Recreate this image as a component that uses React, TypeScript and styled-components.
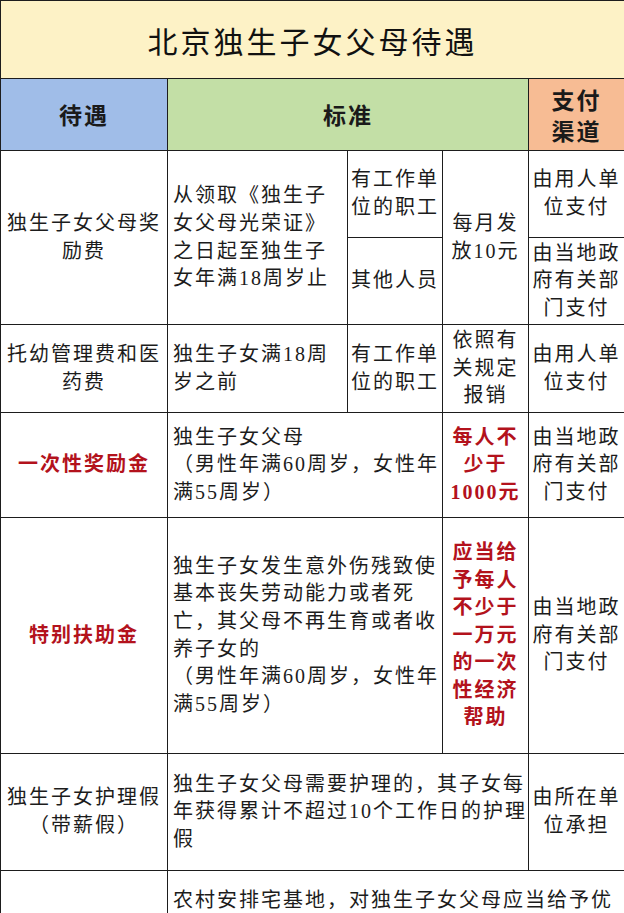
import React from "react";
import styled, { createGlobalStyle } from "styled-components";

const GlobalStyle = createGlobalStyle`
  html, body {
    margin: 0;
    padding: 0;
    background: #ffffff;
  }
  body {
    font-family: "Liberation Serif", "Noto Sans CJK SC", serif;
    color: #1c1c1c;
  }
`;

const LINE = "1.5px solid #1d1d1d";

const Table = styled.table`
  width: 624px;
  border-collapse: collapse;
  table-layout: fixed;
  border: ${LINE};
`;

const Col = styled.col<{ $w: number }>`
  width: ${(p) => p.$w}px;
`;

const Row = styled.tr<{ $h: number }>`
  height: ${(p) => p.$h}px;
`;

const TitleCell = styled.th`
  background: #fdf2c6;
  border: ${LINE};
  font-family: "Noto Sans CJK SC", sans-serif;
  font-size: 30px;
  font-weight: 400;
  letter-spacing: 3px;
  text-align: center;
  padding: 0;
  color: #111111;
`;

const HeadCell = styled.th<{ $bg: string }>`
  background: ${(p) => p.$bg};
  border: ${LINE};
  font-family: "Noto Sans CJK SC", sans-serif;
  font-size: 23px;
  font-weight: 700;
  letter-spacing: 2px;
  line-height: 31px;
  text-align: center;
  padding: 0;
  color: #1a1a1a;
`;

const Cell = styled.td<{ $align?: "left" | "center"; $red?: boolean; $top?: number }>`
  border: ${LINE};
  font-size: 20px;
  letter-spacing: 2px;
  line-height: 27.6px;
  white-space: nowrap;
  overflow: hidden;
  text-align: ${(p) => p.$align || "center"};
  vertical-align: ${(p) => (p.$top !== undefined ? "top" : "middle")};
  padding: ${(p) => (p.$top !== undefined ? `${p.$top}px` : "0")} 3px 0
    ${(p) => (p.$align === "left" ? "5px" : "3px")};
  color: ${(p) => (p.$red ? "#b3121c" : "#1c1c1c")};
  font-weight: ${(p) => (p.$red ? 700 : 400)};
`;

const Lines = ({ text }: { text: string[] }) => (
  <>
    {text.map((t, i) => (
      <React.Fragment key={i}>
        {i > 0 && <br />}
        {t}
      </React.Fragment>
    ))}
  </>
);

const App = () => {
  return (
    <>
      <GlobalStyle />
      <Table>
        <colgroup>
          <Col $w={167} />
          <Col $w={180} />
          <Col $w={95} />
          <Col $w={86} />
          <Col $w={96} />
        </colgroup>
        <thead>
          <Row $h={78}>
            <TitleCell colSpan={5}>北京独生子女父母待遇</TitleCell>
          </Row>
          <Row $h={72}>
            <HeadCell $bg="#a0bde8">待遇</HeadCell>
            <HeadCell $bg="#c3dfa6" colSpan={3}>标准</HeadCell>
            <HeadCell $bg="#f7bc94">
              <Lines text={["支付", "渠道"]} />
            </HeadCell>
          </Row>
        </thead>
        <tbody>
          <Row $h={87}>
            <Cell rowSpan={2}>
              <Lines text={["独生子女父母奖", "励费"]} />
            </Cell>
            <Cell rowSpan={2} $align="left">
              <Lines text={["从领取《独生子", "女父母光荣证》", "之日起至独生子", "女年满18周岁止"]} />
            </Cell>
            <Cell>
              <Lines text={["有工作单", "位的职工"]} />
            </Cell>
            <Cell rowSpan={2}>
              <Lines text={["每月发", "放10元"]} />
            </Cell>
            <Cell>
              <Lines text={["由用人单", "位支付"]} />
            </Cell>
          </Row>
          <Row $h={87}>
            <Cell>其他人员</Cell>
            <Cell>
              <Lines text={["由当地政", "府有关部", "门支付"]} />
            </Cell>
          </Row>
          <Row $h={88}>
            <Cell>
              <Lines text={["托幼管理费和医", "药费"]} />
            </Cell>
            <Cell $align="left">
              <Lines text={["独生子女满18周", "岁之前"]} />
            </Cell>
            <Cell>
              <Lines text={["有工作单", "位的职工"]} />
            </Cell>
            <Cell>
              <Lines text={["依照有", "关规定", "报销"]} />
            </Cell>
            <Cell>
              <Lines text={["由用人单", "位支付"]} />
            </Cell>
          </Row>
          <Row $h={105}>
            <Cell $red>一次性奖励金</Cell>
            <Cell colSpan={2} $align="left">
              <Lines text={["独生子女父母", "（男性年满60周岁，女性年", "满55周岁）"]} />
            </Cell>
            <Cell $red>
              <Lines text={["每人不", "少于", "1000元"]} />
            </Cell>
            <Cell>
              <Lines text={["由当地政", "府有关部", "门支付"]} />
            </Cell>
          </Row>
          <Row $h={236}>
            <Cell $red>特别扶助金</Cell>
            <Cell colSpan={2} $align="left">
              <Lines
                text={[
                  "独生子女发生意外伤残致使",
                  "基本丧失劳动能力或者死",
                  "亡，其父母不再生育或者收",
                  "养子女的",
                  "（男性年满60周岁，女性年",
                  "满55周岁）",
                ]}
              />
            </Cell>
            <Cell $red>
              <Lines text={["应当给", "予每人", "不少于", "一万元", "的一次", "性经济", "帮助"]} />
            </Cell>
            <Cell>
              <Lines text={["由当地政", "府有关部", "门支付"]} />
            </Cell>
          </Row>
          <Row $h={117}>
            <Cell>
              <Lines text={["独生子女护理假", "（带薪假）"]} />
            </Cell>
            <Cell colSpan={3} $align="left">
              <Lines text={["独生子女父母需要护理的，其子女每", "年获得累计不超过10个工作日的护理", "假"]} />
            </Cell>
            <Cell>
              <Lines text={["由所在单", "位承担"]} />
            </Cell>
          </Row>
          <Row $h={140}>
            <Cell />
            <Cell colSpan={4} $align="left" $top={16}>
              农村安排宅基地，对独生子女父母应当给予优
            </Cell>
          </Row>
        </tbody>
      </Table>
    </>
  );
};

export default App;
